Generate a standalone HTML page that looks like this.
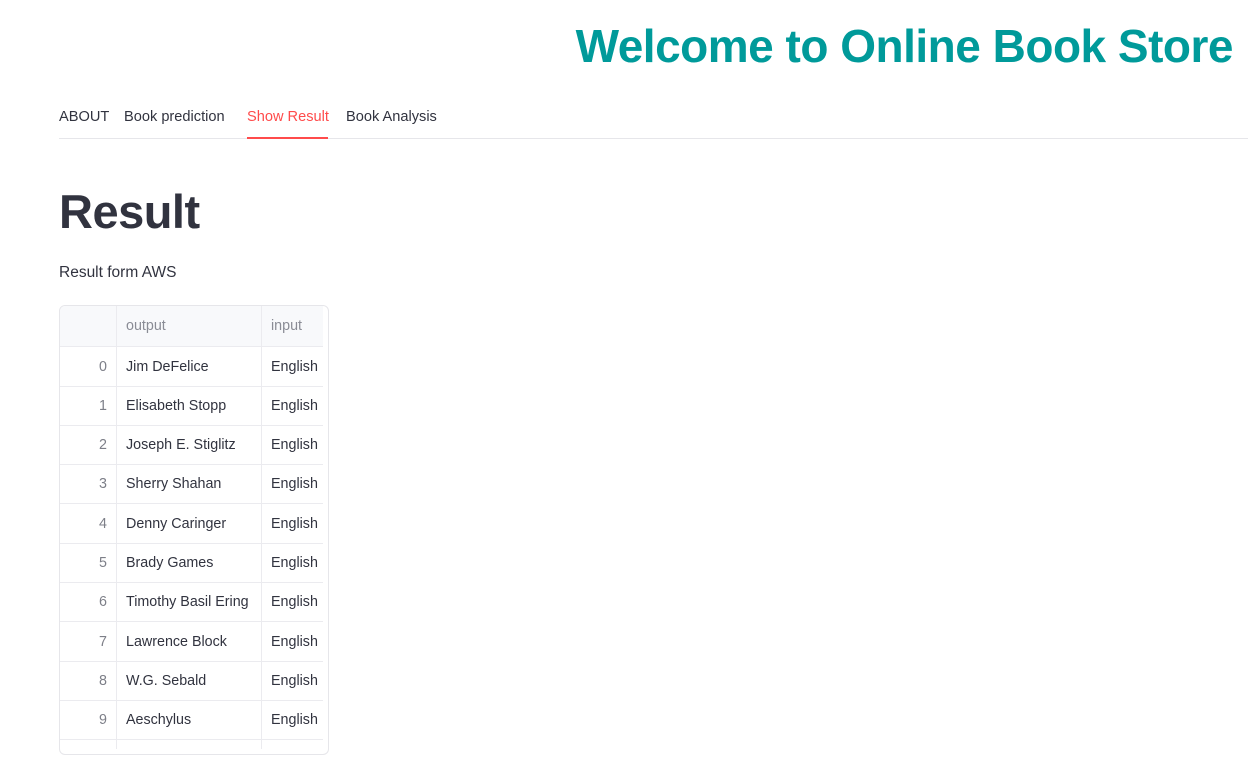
<!DOCTYPE html><html><head><style>
body{margin:0;width:1248px;height:760px;background:#fff;font-family:"Liberation Sans",sans-serif;color:#31333f;position:relative;overflow:hidden}
.t{position:absolute;right:15px;top:19px;font-size:46px;font-weight:bold;color:#009a9a;letter-spacing:-0.5px}
.tabs{position:absolute;left:59px;top:109px;font-size:14.6px}
.tabs span{position:absolute;white-space:nowrap}
.line{position:absolute;left:59px;right:0;top:138px;height:1px;background:#e6e6ea}
.ul{position:absolute;left:247px;width:81px;top:137px;height:2px;background:#ff4b4b}
h1{position:absolute;left:59px;top:184px;margin:0;font-size:47px;font-weight:bold;letter-spacing:-0.5px}
.sub{position:absolute;left:59px;top:264px;font-size:15.5px}
.tb{position:absolute;left:59px;top:305px;width:268px;height:448px;border:1px solid #e6e6ea;border-radius:6px;overflow:hidden}
.r{position:absolute;left:0;width:263px;height:39px;border-bottom:1px solid #ebebef;font-size:14.3px}
.r div{position:absolute;top:0;height:100%;line-height:40px;border-right:1px solid #ebebef;box-sizing:border-box}
.a{left:0;width:57px;text-align:right;padding-right:9px;color:#7d7f88}
.b{left:57px;width:145px;padding-left:9px}
.c{left:202px;width:61px;padding-left:9px;border-right:none!important}
.h{background:#f8f9fb}
.h div{color:#8a8c95}
</style></head><body>
<div class="t">Welcome to Online Book Store</div>
<div class="tabs"><span style="left:0">ABOUT</span><span style="left:65px">Book prediction</span><span style="left:188px;color:#ff4b4b">Show Result</span><span style="left:287px">Book Analysis</span></div>
<div class="line"></div><div class="ul"></div>
<h1>Result</h1>
<div class="sub">Result form AWS</div>
<div class="tb">
<div class="r h" style="top:0;height:40px"><div class="a"></div><div class="b" style="line-height:41px">output</div><div class="c" style="line-height:41px">input</div></div>
<div class="r" style="top:40.5px"><div class="a">0</div><div class="b">Jim DeFelice</div><div class="c">English</div></div>
<div class="r" style="top:79.8px"><div class="a">1</div><div class="b">Elisabeth Stopp</div><div class="c">English</div></div>
<div class="r" style="top:119.1px"><div class="a">2</div><div class="b">Joseph E. Stiglitz</div><div class="c">English</div></div>
<div class="r" style="top:158.4px"><div class="a">3</div><div class="b">Sherry Shahan</div><div class="c">English</div></div>
<div class="r" style="top:197.7px"><div class="a">4</div><div class="b">Denny Caringer</div><div class="c">English</div></div>
<div class="r" style="top:237px"><div class="a">5</div><div class="b">Brady Games</div><div class="c">English</div></div>
<div class="r" style="top:276.3px"><div class="a">6</div><div class="b">Timothy Basil Ering</div><div class="c">English</div></div>
<div class="r" style="top:315.6px"><div class="a">7</div><div class="b">Lawrence Block</div><div class="c">English</div></div>
<div class="r" style="top:354.9px"><div class="a">8</div><div class="b">W.G. Sebald</div><div class="c">English</div></div>
<div class="r" style="top:394.2px"><div class="a">9</div><div class="b">Aeschylus</div><div class="c">English</div></div>
<div class="r" style="top:433.5px;height:9px;border-bottom:none"><div class="a"></div><div class="b"></div><div class="c"></div></div>
</div>
</body></html>
